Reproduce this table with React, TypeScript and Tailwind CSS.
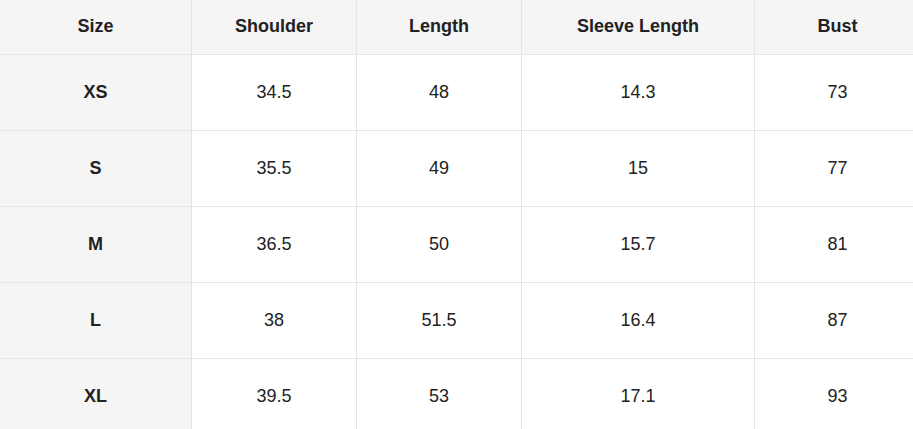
const headers = ["Size", "Shoulder", "Length", "Sleeve Length", "Bust"];

const rows = [
  ["XS", "34.5", "48", "14.3", "73"],
  ["S", "35.5", "49", "15", "77"],
  ["M", "36.5", "50", "15.7", "81"],
  ["L", "38", "51.5", "16.4", "87"],
  ["XL", "39.5", "53", "17.1", "93"],
];

export default function App() {
  return (
    <div
      className="w-[913px] h-[429px] overflow-hidden bg-white text-[#222] text-[18px] leading-none"
      style={{ fontFamily: '"Liberation Sans", Arial, sans-serif' }}
    >
      <div className="grid w-[920px] grid-cols-[192px_165px_165px_233px_165px] grid-rows-[55px_76px_76px_76px_76px_76px]">
        {headers.map((h, i) => (
          <div
            key={h}
            className={`flex items-center justify-center pb-[2px] bg-[#f5f5f5] font-bold border-b border-[#e5e5e5] ${
              i < 4 ? "border-r" : ""
            }`}
          >
            {h}
          </div>
        ))}
        {rows.map((row) =>
          row.map((cell, i) => (
            <div
              key={row[0] + i}
              className={`flex items-center justify-center pb-[2px] border-b border-[#e5e5e5] ${
                i < 4 ? "border-r" : ""
              } ${i === 0 ? "bg-[#f5f5f5] font-bold" : "bg-white"}`}
            >
              {cell}
            </div>
          ))
        )}
      </div>
    </div>
  );
}
